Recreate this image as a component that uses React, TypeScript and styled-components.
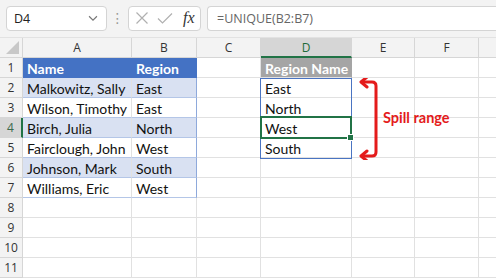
import React from "react";
import styled, { createGlobalStyle, css } from "styled-components";

const GlobalStyle = createGlobalStyle`
  html, body {
    margin: 0;
    padding: 0;
    background: #ffffff;
    overflow: hidden;
  }
  body {
    font-family: "Lato", "Liberation Sans", sans-serif;
  }
`;

const COLS = [23, 109, 65, 64, 91, 63, 64, 40];
const LETTERS = ["A", "B", "C", "D", "E", "F", ""];

const rows: string[][] = [
  ["Name", "Region", "", "Region Name"],
  ["Malkowitz, Sally", "East", "", "East"],
  ["Wilson, Timothy", "East", "", "North"],
  ["Birch, Julia", "North", "", "West"],
  ["Fairclough, John", "West", "", "South"],
  ["Johnson, Mark", "South", "", ""],
  ["Williams, Eric", "West", "", ""],
  [], [], [], [],
];

const Page = styled.div`
  width: 496px;
  height: 280px;
  display: flex;
  flex-direction: column;
  overflow: hidden;
`;

const Toolbar = styled.div`
  height: 38px;
  background: #f3f3f3;
  border-bottom: 1px solid #e2e2e2;
  display: flex;
  align-items: center;
  padding: 0 0 1px 6px;
  box-sizing: border-box;
`;

const NameBox = styled.div`
  width: 101px;
  height: 25px;
  box-sizing: border-box;
  background: #ffffff;
  border: 1px solid #d4d4d4;
  border-radius: 4px;
  display: flex;
  align-items: center;
  justify-content: space-between;
  padding: 0 6px 0 7px;
  font-family: "Open Sans", "Noto Sans", sans-serif;
  font-size: 12.5px;
  color: #222;
`;

const Dots = styled.div`
  width: 21px;
  display: flex;
  justify-content: center;
  color: #9a9a9a;
  font-size: 14px;
  font-family: "DejaVu Sans", sans-serif;
`;

const FxBox = styled.div`
  width: 73px;
  height: 25px;
  box-sizing: border-box;
  background: #ffffff;
  border: 1px solid #d4d4d4;
  border-radius: 4px;
  display: flex;
  align-items: center;
  gap: 8px;
  padding: 0 0 0 6px;
`;

const FxLabel = styled.span`
  font-family: "Liberation Serif", serif;
  font-style: italic;
  font-size: 16px;
  color: #333;
  margin-left: 2px;
`;

const FormulaBar = styled.div`
  flex: 1;
  height: 25px;
  margin-left: 6px;
  box-sizing: border-box;
  background: #ffffff;
  border: 1px solid #d4d4d4;
  border-right: none;
  border-radius: 4px 0 0 4px;
  display: flex;
  align-items: center;
  padding-left: 9px;
  font-family: "Open Sans", "Noto Sans", sans-serif;
  font-size: 12.5px;
  color: #666;
`;

const SheetWrap = styled.div`
  position: relative;
  flex: 1;
`;

const Grid = styled.div`
  display: grid;
  grid-template-columns: ${COLS.map((c) => `${c}px`).join(" ")};
  grid-auto-rows: 20px;
`;

type CellProps = {
  $tableHead?: boolean;
  $band?: boolean;
  $banded?: boolean;
  $tableEdge?: boolean;
  $spillHead?: boolean;
};

const HeadCell = styled.div<{ $active?: boolean; $row?: boolean }>`
  box-sizing: border-box;
  background: #f3f3f3;
  border-right: 1px solid #d6d6d6;
  border-bottom: 1px solid #d6d6d6;
  font-family: "Open Sans", "Noto Sans", sans-serif;
  font-size: 12px;
  color: #333;
  display: flex;
  align-items: center;
  justify-content: center;
  ${(p) =>
    p.$active &&
    css`
      background: #d6d6d6;
      ${p.$row
        ? css`
            border-right: 2px solid #217346;
            color: #3c6a4c;
          `
        : css`
            border-bottom: 2px solid #217346;
            color: #1e6b3a;
          `}
    `}
`;

const Corner = styled(HeadCell)`
  align-items: flex-end;
  justify-content: flex-end;
  padding: 0 3px 3px 0;
`;

const Triangle = styled.div`
  width: 0;
  height: 0;
  border-left: 13px solid transparent;
  border-bottom: 13px solid #c8c8c8;
`;

const Cell = styled.div<CellProps>`
  box-sizing: border-box;
  border-right: 1px solid #e1e1e1;
  border-bottom: 1px solid #e1e1e1;
  font-size: 14px;
  color: #111;
  padding: 1px 0 0 4px;
  line-height: 19px;
  white-space: nowrap;
  overflow: hidden;
  ${(p) =>
    p.$banded &&
    css`
      border-bottom-color: #b4c6e7;
    `}
  ${(p) =>
    p.$band &&
    css`
      background: #d9e1f2;
    `}
  ${(p) =>
    p.$tableEdge &&
    css`
      border-right-color: #8ea9db;
    `}
  ${(p) =>
    p.$tableHead &&
    css`
      background: #4472c4;
      color: #ffffff;
      font-weight: 700;
      border-bottom-color: #4472c4;
      border-right-color: #4472c4;
    `}
  ${(p) =>
    p.$spillHead &&
    css`
      background: #a5a5a5;
      color: #ffffff;
      font-weight: 700;
      border-right-color: #a5a5a5;
    `}
`;

const SpillBox = styled.div`
  position: absolute;
  left: 260px;
  top: 40px;
  width: 92px;
  height: 81px;
  box-sizing: border-box;
  border: 1px solid #4a74c2;
  pointer-events: none;
`;

const Selection = styled.div`
  position: absolute;
  left: 260px;
  top: 78px;
  width: 92px;
  height: 23px;
  box-sizing: border-box;
  border: 2px solid #217346;
`;

const Handle = styled.div`
  position: absolute;
  right: -4px;
  bottom: -4px;
  width: 5px;
  height: 5px;
  background: #217346;
  border: 1px solid #ffffff;
`;

const Callout = styled.div`
  position: absolute;
  left: 357px;
  top: 40px;
  display: flex;
  align-items: center;
`;

const CalloutText = styled.span`
  font-size: 14.5px;
  font-weight: 700;
  color: #e41b1b;
  margin-left: 0;
  padding-bottom: 4px;
`;

const Chevron = () => (
  <svg width="14" height="14" viewBox="0 0 16 16" fill="none" stroke="#777" strokeWidth="1.3">
    <path d="M3.5 6 L8 10.5 L12.5 6" />
  </svg>
);

const CancelIcon = () => (
  <svg width="14" height="14" viewBox="0 0 14 14" stroke="#b0b0b0" strokeWidth="1.2" fill="none">
    <path d="M1.5 1.5 L12.5 12.5 M12.5 1.5 L1.5 12.5" />
  </svg>
);

const CheckIcon = () => (
  <svg width="16" height="14" viewBox="0 0 16 14" stroke="#b0b0b0" strokeWidth="1.2" fill="none">
    <path d="M1 7.5 L5.5 12 L15 2.5" />
  </svg>
);

const Bracket = () => (
  <svg width="26" height="82" viewBox="0 0 26 82" fill="none" stroke="#e41b1b" strokeWidth="3" strokeLinecap="round" strokeLinejoin="round">
    <path d="M5 4 H15 Q19 4 19 8 V74 Q19 78 15 78 H5" />
    <path d="M10 -1 L4 4 L10 9" />
    <path d="M10 73 L4 78 L10 83" />
  </svg>
);

export default function App() {
  return (
    <Page>
      <GlobalStyle />
      <Toolbar>
        <NameBox>
          <span>D4</span>
          <Chevron />
        </NameBox>
        <Dots>⋮</Dots>
        <FxBox>
          <CancelIcon />
          <CheckIcon />
          <FxLabel>fx</FxLabel>
        </FxBox>
        <FormulaBar>=UNIQUE(B2:B7)</FormulaBar>
      </Toolbar>
      <SheetWrap>
        <Grid>
          <Corner>
            <Triangle />
          </Corner>
          {LETTERS.map((l) => (
            <HeadCell key={`h${l}`} $active={l === "D"}>
              {l}
            </HeadCell>
          ))}
          {rows.map((r, i) => {
            const n = i + 1;
            const inTable = n <= 7;
            const band = inTable && n > 1 && n % 2 === 0;
            return (
              <React.Fragment key={n}>
                <HeadCell $active={n === 4} $row>
                  {n}
                </HeadCell>
                {LETTERS.map((l, c) => {
                  const tableCol = c < 2 && inTable;
                  return (
                    <Cell
                      key={l + n}
                      $tableHead={tableCol && n === 1}
                      $band={tableCol && band}
                      $banded={tableCol}
                      $tableEdge={tableCol && c === 1}
                      $spillHead={c === 3 && n === 1}
                    >
                      {r[c] ?? ""}
                    </Cell>
                  );
                })}
              </React.Fragment>
            );
          })}
        </Grid>
        <SpillBox />
        <Selection>
          <Handle />
        </Selection>
        <Callout>
          <Bracket />
          <CalloutText>Spill range</CalloutText>
        </Callout>
      </SheetWrap>
    </Page>
  );
}
